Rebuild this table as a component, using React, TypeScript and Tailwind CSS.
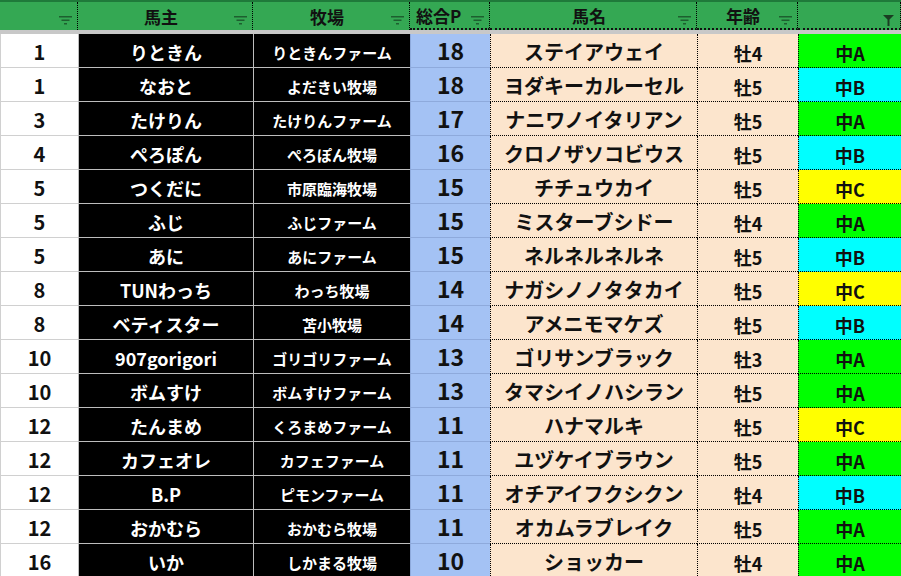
import React from "react";

type Row = {
  rank: string;
  owner: string;
  ranch: string;
  points: string;
  horse: string;
  age: string;
  grade: "A" | "B" | "C";
};

const rows: Row[] = [
  { rank: "1", owner: "りときん", ranch: "りときんファーム", points: "18", horse: "ステイアウェイ", age: "牡4", grade: "A" },
  { rank: "1", owner: "なおと", ranch: "よだきい牧場", points: "18", horse: "ヨダキーカルーセル", age: "牡5", grade: "B" },
  { rank: "3", owner: "たけりん", ranch: "たけりんファーム", points: "17", horse: "ナニワノイタリアン", age: "牡5", grade: "A" },
  { rank: "4", owner: "ぺろぽん", ranch: "ぺろぽん牧場", points: "16", horse: "クロノザソコビウス", age: "牡5", grade: "B" },
  { rank: "5", owner: "つくだに", ranch: "市原臨海牧場", points: "15", horse: "チチュウカイ", age: "牡5", grade: "C" },
  { rank: "5", owner: "ふじ", ranch: "ふじファーム", points: "15", horse: "ミスターブシドー", age: "牡4", grade: "A" },
  { rank: "5", owner: "あに", ranch: "あにファーム", points: "15", horse: "ネルネルネルネ", age: "牡5", grade: "B" },
  { rank: "8", owner: "TUNわっち", ranch: "わっち牧場", points: "14", horse: "ナガシノノタタカイ", age: "牡5", grade: "C" },
  { rank: "8", owner: "ベティスター", ranch: "苫小牧場", points: "14", horse: "アメニモマケズ", age: "牡5", grade: "B" },
  { rank: "10", owner: "907gorigori", ranch: "ゴリゴリファーム", points: "13", horse: "ゴリサンブラック", age: "牡3", grade: "A" },
  { rank: "10", owner: "ボムすけ", ranch: "ボムすけファーム", points: "13", horse: "タマシイノハシラン", age: "牡5", grade: "A" },
  { rank: "12", owner: "たんまめ", ranch: "くろまめファーム", points: "11", horse: "ハナマルキ", age: "牡5", grade: "C" },
  { rank: "12", owner: "カフェオレ", ranch: "カフェファーム", points: "11", horse: "ユヅケイブラウン", age: "牡5", grade: "A" },
  { rank: "12", owner: "B.P", ranch: "ピモンファーム", points: "11", horse: "オチアイフクシクン", age: "牡4", grade: "B" },
  { rank: "12", owner: "おかむら", ranch: "おかむら牧場", points: "11", horse: "オカムラブレイク", age: "牡5", grade: "A" },
  { rank: "16", owner: "いか", ranch: "しかまる牧場", points: "10", horse: "ショッカー", age: "牡4", grade: "A" },
];

const gradeBg = {
  A: "bg-[#00ff00]",
  B: "bg-[#00ffff]",
  C: "bg-[#ffff00]",
};

function FilterIcon() {
  return (
    <svg width="13" height="9" viewBox="0 0 13 9" className="absolute right-[5px] top-[14px]">
      <rect x="0" y="0" width="13" height="1.5" fill="#1d5f2f" />
      <rect x="2.5" y="3.5" width="8" height="1.5" fill="#1d5f2f" />
      <rect x="5" y="7" width="3" height="1.5" fill="#1d5f2f" />
    </svg>
  );
}

function FunnelIcon() {
  return (
    <svg width="11" height="11" viewBox="0 0 11 11" className="absolute right-[6px] top-[13px]">
      <path d="M0 0 H11 L6.5 4.5 V11 H4.5 V4.5 Z" fill="#1a3d22" />
    </svg>
  );
}

function HeaderCell({
  w,
  label,
  funnel,
  dark,
  tight,
}: {
  w: string;
  label?: string;
  funnel?: boolean;
  dark?: boolean;
  tight?: boolean;
}) {
  return (
    <div
      className={`relative ${w} h-full flex items-center border-r border-dotted border-r-black ${
        tight ? "justify-start pl-[6px]" : "justify-center pr-2"
      } ${dark ? "border-b-2 border-b-[#111]" : ""}`}
    >
      {label && <span className="text-[17px] font-bold text-[#111] pt-[1px]">{label}</span>}
      {funnel ? <FunnelIcon /> : <FilterIcon />}
    </div>
  );
}

export default function App() {
  return (
    <div
      className="w-[901px] h-[576px] overflow-hidden bg-white"
      style={{ fontFamily: '"Noto Sans CJK JP", "Noto Sans", sans-serif' }}
    >
      <div className="flex h-[30px] bg-[#34a853] border-t-2 border-t-[#1f7a3a]">
        <HeaderCell w="w-[78px]" />
        <HeaderCell w="w-[175px]" label="馬主" />
        <HeaderCell w="w-[157px]" label="牧場" />
        <HeaderCell w="w-[80px]" label="総合P" dark tight />
        <HeaderCell w="w-[207px]" label="馬名" dark />
        <HeaderCell w="w-[101px]" label="年齢" dark />
        <HeaderCell w="w-[103px]" funnel dark />
      </div>
      <div className="h-[4px] bg-[#c8c8c8]" />
      <div className="flex flex-col leading-none font-bold">
        {rows.map((r, i) => (
          <div key={i} className="flex h-[34px]">
            <div className="w-[78px] flex items-center justify-center pt-[3px] border-l border-b border-[#d0d0d0] text-[20px] text-[#111]">
              {r.rank}
            </div>
            <div className="w-[175px] flex items-center justify-center pt-[3px] bg-black text-white border-l border-b border-[#bdbdbd] text-[18px]">
              {r.owner}
            </div>
            <div className="w-[157px] flex items-center justify-center pt-[4px] bg-black text-white border-l border-b border-[#bdbdbd] text-[15px]">
              {r.ranch}
            </div>
            <div className="w-[80px] flex items-center justify-center bg-[#a4c2f4] border-l border-b border-[#8eaadc] text-[23px] text-[#111]">
              {r.points}
            </div>
            <div className="w-[207px] flex items-center justify-center pt-[3px] bg-[#fce5cd] border-l border-b border-dotted border-black text-[20px] text-[#111]">
              {r.horse}
            </div>
            <div className="w-[101px] flex items-center justify-center pt-[4px] bg-[#fce5cd] border-l border-b border-dotted border-black text-[18px] text-[#111]">
              {r.age}
            </div>
            <div
              className={`w-[103px] flex items-center justify-center pt-[4px] ${gradeBg[r.grade]} border-l border-b border-dotted border-black text-[18px] text-[#111]`}
            >
              中{r.grade}
            </div>
          </div>
        ))}
      </div>
    </div>
  );
}
